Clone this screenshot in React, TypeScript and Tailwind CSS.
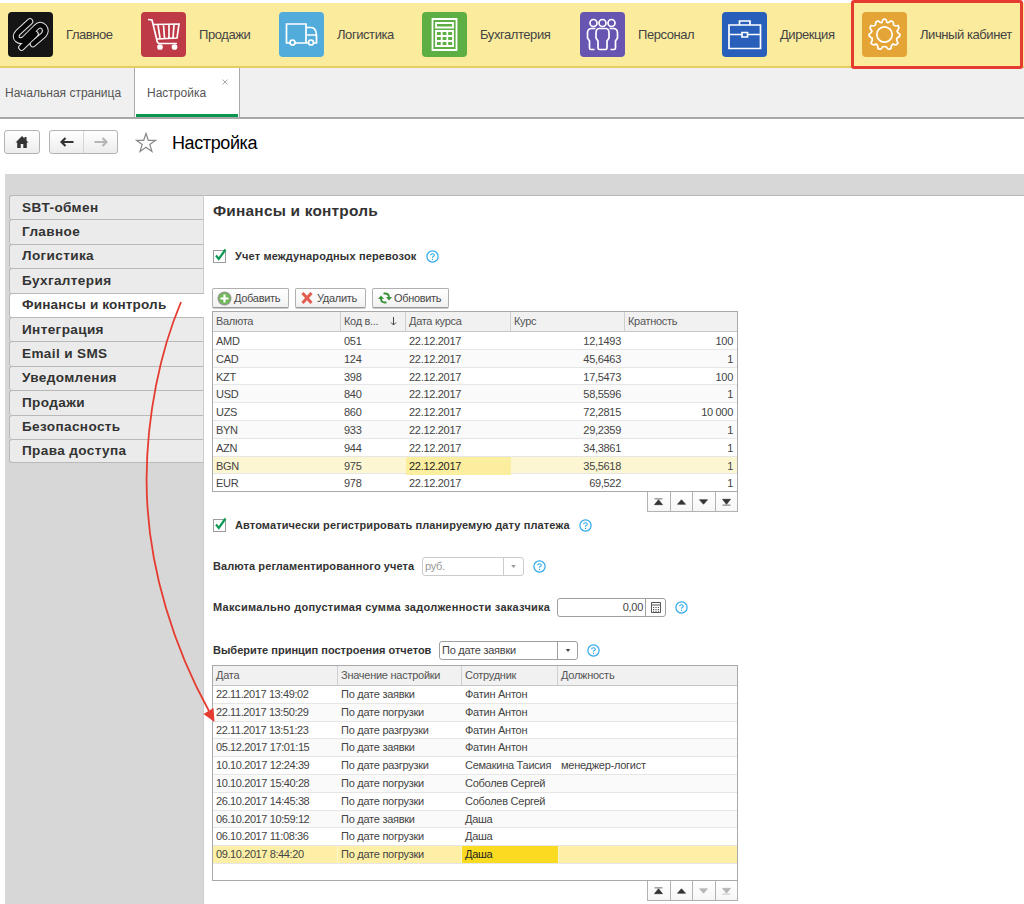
import type { ReactNode } from "react";

const NAV: { label: string; width: string; color: string; icon: ReactNode }[] = [
  {
    label: "Главное",
    width: "w-[133px]",
    color: "bg-[#151515]",
    icon: (
      <g strokeLinecap="round" strokeLinejoin="round">
        <path d="M22 9.500L10 20.500Q6.500 24.500 9.500 27.500Q13 30 16.500 27L28 15.500Q32 11 36 15Q39 19 35.500 23L25 32M13.500 35.500L27.500 22" stroke="#e2e2e2" strokeWidth="6.600" />
        <path d="M22 9.500L10 20.500Q6.500 24.500 9.500 27.500Q13 30 16.500 27L28 15.500Q32 11 36 15Q39 19 35.500 23L25 32M13.500 35.500L27.500 22" stroke="#060606" strokeWidth="4.600" />
      </g>
    ),
  },
  {
    label: "Продажи",
    width: "w-[138px]",
    color: "bg-[#be3a46]",
    icon: (
      <>
        <path d="M7 7.500L11 8L15.500 26.500Q16 31 18 31.500H36M12 12.500L38 12L36 26L16 27M17 13L19 26M22.500 13L23.500 26M28 13V26M33 13L32 26" />
        <circle cx="19" cy="35" r="2" fill="#fff" />
        <circle cx="33.500" cy="35" r="2" fill="#fff" />
      </>
    ),
  },
  {
    label: "Логистика",
    width: "w-[143px]",
    color: "bg-[#51acdc]",
    icon: (
      <>
        <path d="M11 31H7.500V12H27V31H16M27 15.500H32Q37 15.500 37.500 23V31H34.500M29.500 31H27M28 23H37.500" />
        <circle cx="13.500" cy="30.500" r="2.500" />
        <circle cx="32" cy="30.500" r="2.500" />
      </>
    ),
  },
  {
    label: "Бухгалтерия",
    width: "w-[158px]",
    color: "bg-[#5daf44]",
    icon: (
      <path d="M10.500 7H34.500V38H10.500ZM14 11H31V15.500H14ZM14 19H31V34H14ZM14 24H31M14 29H31M19.700 19V34M25.300 19V34" strokeWidth="1.800" />
    ),
  },
  {
    label: "Персонал",
    width: "w-[142px]",
    color: "bg-[#6855b2]",
    icon: (
      <>
        <circle cx="13.500" cy="11" r="3.500" />
        <circle cx="22.500" cy="11" r="3.500" />
        <circle cx="31.500" cy="11" r="3.500" />
        <path d="M19 16.500H26Q29 17 29 21V26L27 29V36Q27 37.500 25.500 37.500H19.500Q18 37.500 18 36V29L16 26V21Q16 17 19 16.500ZM15.500 16.500H11Q7.500 17 7.500 21V26L9.500 29V36Q9.500 37.500 11 37.500H14.500M29.500 16.500H34Q37.500 17 37.500 21V26L35.500 29V36Q35.500 37.500 34 37.500H30.500" />
      </>
    ),
  },
  {
    label: "Дирекция",
    width: "w-[140px]",
    color: "bg-[#285fba]",
    icon: <path d="M7 13H38.500V36.500H7ZM17.500 13V9H28V13M7 22.500H19.500M26 22.500H38.500M20 20.500H25.500V25H20Z" />,
  },
  {
    label: "Личный кабинет",
    width: "w-[160px]",
    color: "bg-[#e5a436]",
    icon: (
      <>
        <circle cx="22.500" cy="22.500" r="7.700" />
        <path d="M22.500 7Q24.500 7 25 10.500Q27 11 28.500 9Q32 9 31.500 13Q33 14.500 36 13.500Q38 16 35 19Q35.500 21 38 22.500Q38 25 35 26Q34 28 36 31Q34 34 31 32Q29 33 29 36.500Q26 38.500 24.500 35Q22.500 34 20.500 35Q19 38.500 16 36.500Q16 33 14 32Q11 34 9 31Q11 28 10 26Q7 25 7 22.500Q9.500 21 10 19Q7 16 9 13.500Q12 14.500 13.500 13Q13 9 16.500 9Q18 11 20 10.500Q20.500 7 22.500 7Z" />
      </>
    ),
  },
];

const SECTIONS = [
  "SBT-обмен",
  "Главное",
  "Логистика",
  "Бухгалтерия",
  "Финансы и контроль",
  "Интеграция",
  "Email и SMS",
  "Уведомления",
  "Продажи",
  "Безопасность",
  "Права доступа",
];

const RATES = [
  ["AMD", "051", "12,1493", "100"],
  ["CAD", "124", "45,6463", "1"],
  ["KZT", "398", "17,5473", "100"],
  ["USD", "840", "58,5596", "1"],
  ["UZS", "860", "72,2815", "10 000"],
  ["BYN", "933", "29,2359", "1"],
  ["AZN", "944", "34,3861", "1"],
  ["BGN", "975", "35,5618", "1"],
  ["EUR", "978", "69,522", "1"],
];

const HISTORY = [
  ["22.11.2017 13:49:02", "По дате заявки", "Фатин Антон", ""],
  ["22.11.2017 13:50:29", "По дате погрузки", "Фатин Антон", ""],
  ["22.11.2017 13:51:23", "По дате разгрузки", "Фатин Антон", ""],
  ["05.12.2017 17:01:15", "По дате заявки", "Фатин Антон", ""],
  ["10.10.2017 12:24:39", "По дате разгрузки", "Семакина Таисия", "менеджер-логист"],
  ["10.10.2017 15:40:28", "По дате погрузки", "Соболев Сергей", ""],
  ["26.10.2017 14:45:38", "По дате погрузки", "Соболев Сергей", ""],
  ["06.10.2017 10:59:12", "По дате заявки", "Даша", ""],
  ["06.10.2017 11:08:36", "По дате погрузки", "Даша", ""],
  ["09.10.2017 8:44:20", "По дате погрузки", "Даша", ""],
];

function Help({ className = "" }: { className?: string }) {
  return (
    <svg viewBox="0 0 13 13" className={`h-[13px] w-[13px] shrink-0 ${className}`} fill="none" stroke="#2fa9ea">
      <circle cx="6.500" cy="6.500" r="5.600" strokeWidth="1.200" />
      <path d="M4.700 5.300Q4.700 3.700 6.500 3.700T8.300 5.200Q8.300 6 7.200 6.500Q6.500 6.900 6.500 7.700M6.500 8.800V9.900" strokeWidth="1.100" />
    </svg>
  );
}

function Check() {
  return (
    <span className="flex h-[13px] w-[13px] shrink-0 border border-[#9c9c9c] bg-white">
      <svg viewBox="0 0 13 14" className="-mt-[3px] h-[14px] w-[13px] shrink-0 overflow-visible" fill="none">
        <path d="M2 7.500L4.800 11L11.500 1.500" stroke="#0c9a55" strokeWidth="2.200" />
      </svg>
    </span>
  );
}

const PAGER_SHAPES = [
  "M1.500 1H10.500M6 2L1.500 7.500H10.500Z",
  "M6 2L1.500 7H10.500Z",
  "M6 7L1.500 2H10.500Z",
  "M1.500 8H10.500M6 7L1.500 1.500H10.500Z",
];

function Pager({ muted = false }: { muted?: boolean }) {
  return (
    <div className="ml-auto flex h-5 w-[91px] border border-t-0 border-[#b2b2b2] bg-linear-to-b from-white to-[#f6f6f6]">
      {PAGER_SHAPES.map((d, i) => (
        <span
          key={d}
          className={`flex flex-1 items-center justify-center ${i ? "border-l border-[#b2b2b2]" : ""} ${
            muted && i > 1 ? "text-[#b5b5b5]" : "text-[#333]"
          }`}
        >
          <svg viewBox="0 0 12 9" className="h-2 w-[11px]" fill="currentColor" stroke="currentColor" strokeWidth="0.800">
            <path d={d} />
          </svg>
        </span>
      ))}
    </div>
  );
}

function Bold({ children, className = "" }: { children: ReactNode; className?: string }) {
  return <span className={`text-[11px] font-bold whitespace-nowrap text-[#333] ${className}`}>{children}</span>;
}

const BUTTON =
  "flex h-5 items-center rounded-[2px] border border-[#b0b0b0] border-b-[#999] bg-linear-to-b from-white to-[#f1f1f1] text-[11px] text-[#4a4a4a] shadow-[0_1px_0_#ccc] whitespace-nowrap";
const RATE_GRID = "grid grid-cols-[128px_65px_105px_114px_1fr]";
const HISTORY_GRID = "grid grid-cols-[125px_124px_96px_1fr]";

export default function App() {
  return (
    <div className="relative flex h-[904px] w-[1024px] flex-col overflow-hidden bg-white font-['Liberation_Sans',Arial,sans-serif] text-[#444]">
      <header className="mt-[3px] flex h-[65px] shrink-0 border-b-2 border-[#e3cd64] bg-[#fbeb9d] pt-[9px] pl-2">
        {NAV.map((n) => (
          <div key={n.label} className={`flex h-[45px] shrink-0 items-center gap-[13px] ${n.width}`}>
            <span className={`h-[45px] w-[45px] shrink-0 rounded-[4px] ${n.color}`}>
              <svg viewBox="0 0 45 45" className="h-[45px] w-[45px]" fill="none" stroke="#fff" strokeWidth="1.700">
                {n.icon}
              </svg>
            </span>
            <span className="pt-px text-[13px] tracking-[-0.430px] whitespace-nowrap text-[#444]">{n.label}</span>
          </div>
        ))}
      </header>

      <div className="flex h-[51px] shrink-0 border-b-2 border-[#a8a8a8] bg-[#f0f0f0] text-[12px] text-[#555]">
        <div className="flex w-[134px] items-center pl-[5px]">Начальная страница</div>
        <div className="relative flex w-[106px] items-center border-x border-[#aaa] bg-white pl-3">
          Настройка
          <svg viewBox="0 0 6 6" className="absolute top-[11px] right-[11px] h-[6px] w-[6px]" stroke="#aaa" strokeWidth="1">
            <path d="M0.500 0.500L5.500 5.500M5.500 0.500L0.500 5.500" />
          </svg>
          <span className="absolute inset-x-px bottom-0 h-[3px] bg-[#0b964f]" />
        </div>
      </div>

      <div className="flex h-[55px] shrink-0 items-start pt-[11px] pl-1">
        <span className="flex h-6 w-9 items-center justify-center rounded-[3px] border border-[#b3b3b3] bg-linear-to-b from-white to-[#ececec]">
          <svg viewBox="0 0 14 12" className="h-3 w-[14px]" fill="#333">
            <path d="M7 0L0.500 6.500H2.200V12H5.700V8H8.300V12H11.800V6.500H13.500L11.500 4.500V1H9.500V2.500Z" />
          </svg>
        </span>
        <span className="ml-[9px] flex h-6 w-[69px] rounded-[3px] border border-[#b3b3b3] bg-linear-to-b from-white to-[#ececec]">
          <span className="flex flex-1 items-center justify-center border-r border-[#d5d5d5]">
            <svg viewBox="0 0 14 10" className="h-[10px] w-[14px]" fill="none" stroke="#333" strokeWidth="2.200">
              <path d="M13.500 5H2M5.500 1L1.500 5L5.500 9" />
            </svg>
          </span>
          <span className="flex flex-1 items-center justify-center">
            <svg viewBox="0 0 14 10" className="h-[10px] w-[14px]" fill="none" stroke="#b5b5b5" strokeWidth="2.200">
              <path d="M0.500 5H12M8.500 1L12.500 5L8.500 9" />
            </svg>
          </span>
        </span>
        <svg viewBox="0 0 22 21" className="mt-[2px] ml-[17px] h-[21px] w-[22px]" fill="none" stroke="#888" strokeWidth="1.200">
          <path d="M11 1.500L13.300 8.300H20.500L14.800 12.500L17 19.500L11 15.300L5 19.500L7.200 12.500L1.500 8.300H8.700Z" />
        </svg>
        <h1 className="ml-[15px] text-[18px] leading-[26px] tracking-[-0.400px] text-black">Настройка</h1>
      </div>

      <div className="ml-[5px] flex grow flex-col bg-[#d7d7d7] pt-[21px]">
        <div className="flex grow">
          <nav className="w-[199px] shrink-0 border-r border-[#ccc] pl-1">
            {SECTIONS.map((s, i) => (
              <div
                key={s}
                className={`flex h-[24.400px] items-center rounded-l-[3px] border-t border-l border-[#b9b9b9] pl-3 text-[12px] font-bold whitespace-nowrap text-[#333] ${
                  i === 4 ? "-mr-px bg-white tracking-[0.130px]" : "bg-[#ebebeb] tracking-[0.330px]"
                } ${i === 10 ? "border-b" : ""}`}
              >
                <span className="origin-left scale-x-[1.130]">{s}</span>
              </div>
            ))}
          </nav>

          <main className="flex grow flex-col border-t border-[#b9b9b9] bg-white pl-[9px]">
            <h2 className="flex h-[31px] origin-left scale-x-[1.100] items-center text-[14px] font-bold tracking-[0.200px] text-[#333]">
              Финансы и контроль
            </h2>
            <div className="mt-[19px] flex h-5 items-center">
              <Check />
              <Bold className="ml-[9px] w-[182px] tracking-[0.150px]">Учет международных перевозок</Bold>
              <Help className="ml-[9px]" />
            </div>

            <div className="mt-[22px] -ml-px flex gap-[6px]">
              <span className={`${BUTTON} w-[77px] pl-1`}>
                <svg viewBox="0 0 15 15" className="mr-[2px] h-[15px] w-[15px] shrink-0">
                  <circle cx="7.500" cy="7.500" r="7" fill="#999" />
                  <circle cx="7.500" cy="7.500" r="6" fill="#72b65a" />
                  <path d="M7.500 3.500V11.500M3.500 7.500H11.500" stroke="#fff" strokeWidth="2.200" />
                </svg>
                <span className="tracking-[-0.300px]">Добавить</span>
              </span>
              <span className={`${BUTTON} w-[71px] pl-[5px]`}>
                <svg viewBox="0 0 12 12" className="mr-[4px] h-3 w-3 shrink-0" stroke="#e25c50" strokeWidth="3">
                  <path d="M1.500 1L10.500 11M10.500 1L1.500 11" />
                </svg>
                <span className="tracking-[-0.300px]">Удалить</span>
              </span>
              <span className={`${BUTTON} w-[77px] pl-[5px]`}>
                <svg viewBox="0 0 14 12" className="mr-[2px] h-3 w-[14px] shrink-0" fill="none" stroke="#36913a" strokeWidth="1.800">
                  <path d="M5.500 1.500H7Q11 1.500 11 5.500M8.500 10.500H7Q3 10.500 3 6.500" />
                  <path d="M8 5H14L11 8.500ZM0 7H6L3 3.500Z" fill="#36913a" stroke="none" />
                </svg>
                <span className="tracking-[-0.350px]">Обновить</span>
              </span>
            </div>

            <div className="mt-[3px] -ml-px h-[181px] w-[526px] overflow-hidden border border-[#a9a9a9] text-[11px] tracking-[-0.300px]">
              <div className={`${RATE_GRID} h-5 border-b border-[#c6c6c6] bg-[#f1f1f1] leading-[19px] text-[#555]`}>
                <span className="border-r border-[#d0d0d0] pl-[3px]">Валюта</span>
                <span className="flex justify-between border-r border-[#d0d0d0] pr-2 pl-[3px]">
                  Код в...
                  <svg viewBox="0 0 7 9" className="mt-[5px] h-[9px] w-[7px]" fill="none" stroke="#444">
                    <path d="M3.500 0V8M1 5.500L3.500 8L6 5.500" />
                  </svg>
                </span>
                <span className="border-r border-[#d0d0d0] pl-[3px]">Дата курса</span>
                <span className="border-r border-[#d0d0d0] pl-[3px]">Курс</span>
                <span className="pl-[3px]">Кратность</span>
              </div>
              {RATES.map(([code, num, rate, mult], i) => (
                <div
                  key={code}
                  className={`${RATE_GRID} h-[17.800px] leading-[18px] ${i < 8 ? "border-b border-[#e6e6e6]" : ""} ${
                    i === 7 ? "bg-[#fdf6d2]" : i % 2 ? "bg-[#fafafa]" : "bg-white"
                  }`}
                >
                  <span className="pl-[3px]">{code}</span>
                  <span className="pl-[3px]">{num}</span>
                  <span className={i === 7 ? "bg-[#fcee9f] pl-[3px] text-[#222]" : "pl-[3px]"}>22.12.2017</span>
                  <span className="pr-[4px] text-right">{rate}</span>
                  <span className="pr-[4px] text-right">{mult}</span>
                </div>
              ))}
            </div>
            <div className="-ml-px w-[526px]">
              <Pager />
            </div>

            <div className="mt-[3px] flex h-5 items-center">
              <Check />
              <Bold className="ml-[9px] w-[336px] tracking-[0.120px]">Автоматически регистрировать планируемую дату платежа</Bold>
              <Help className="ml-[8px]" />
            </div>

            <div className="mt-[21px] flex h-5 items-center">
              <Bold className="w-[209px] tracking-[0.090px]">Валюта регламентированного учета</Bold>
              <span className="flex h-[19px] w-[102px] items-center rounded-[3px] border border-[#ccc] text-[11px] tracking-[-0.300px] text-[#999]">
                <span className="grow pl-[2px]">руб.</span>
                <span className="flex h-full w-[20px] items-center justify-center border-l border-[#ccc]">
                  <svg viewBox="0 0 6 4" className="h-[3px] w-[5px]" fill="#999">
                    <path d="M0 0H6L3 4Z" />
                  </svg>
                </span>
              </span>
              <Help className="ml-[9px]" />
            </div>

            <div className="mt-[21px] flex h-5 items-center">
              <Bold className="w-[344px] tracking-[0.270px]">Максимально допустимая сумма задолженности заказчика</Bold>
              <span className="flex h-[19px] w-[109px] items-center rounded-[3px] border border-[#a0a0a0] text-[11px] tracking-[-0.300px]">
                <span className="grow pr-[2px] text-right">0,00</span>
                <span className="flex h-full w-[20px] items-center justify-center border-l border-[#a0a0a0]">
                  <svg viewBox="0 0 10 11" className="h-[11px] w-[10px]" fill="none" stroke="#555">
                    <path d="M0.500 0.500H9.500V10.500H0.500ZM1 3H9" />
                    <path d="M2 5.500H8M2 7.500H8M2 9.200H8" strokeDasharray="1.200 1.200" />
                  </svg>
                </span>
              </span>
              <Help className="ml-[9px]" />
            </div>

            <div className="mt-[23px] flex h-5 items-center">
              <Bold className="w-[226px]">Выберите принцип построения отчетов</Bold>
              <span className="flex h-[19px] w-[139px] items-center rounded-[3px] border border-[#a0a0a0] text-[11px] tracking-[-0.250px]">
                <span className="grow pl-[2px]">По дате заявки</span>
                <span className="flex h-full w-[20px] items-center justify-center border-l border-[#a0a0a0]">
                  <svg viewBox="0 0 6 4" className="h-[3px] w-[6px]" fill="#444">
                    <path d="M0 0H6L3 4Z" />
                  </svg>
                </span>
              </span>
              <Help className="ml-[9px]" />
            </div>

            <div className="mt-[5px] -ml-px h-[216px] w-[526px] shrink-0 border border-[#a9a9a9] text-[11px] tracking-[-0.260px]">
              <div className={`${HISTORY_GRID} h-5 border-b border-[#c6c6c6] bg-[#f1f1f1] leading-[19px] text-[#555]`}>
                <span className="border-r border-[#d0d0d0] pl-[3px]">Дата</span>
                <span className="border-r border-[#d0d0d0] pl-[3px]">Значение настройки</span>
                <span className="border-r border-[#d0d0d0] pl-[3px]">Сотрудник</span>
                <span className="pl-[3px]">Должность</span>
              </div>
              {HISTORY.map(([date, value, person, role], i) => (
                <div
                  key={date}
                  className={`${HISTORY_GRID} h-[17.800px] border-b border-[#e6e6e6] leading-[17px] whitespace-nowrap ${
                    i === 9 ? "bg-[#fdf0a6]" : i % 2 ? "bg-[#fafafa]" : "bg-white"
                  }`}
                >
                  <span className={`pl-[3px] tracking-[-0.400px] ${i === 9 ? "border-r border-[#fff6cf]" : ""}`}>{date}</span>
                  <span className={`pl-[3px] ${i === 9 ? "border-r border-[#fff6cf]" : ""}`}>{value}</span>
                  <span className={`pl-[3px] ${i === 9 ? "bg-[#fbdb22] text-[#222]" : ""}`}>{person}</span>
                  <span className={i === 9 ? "border-l border-[#fff6cf] pl-[3px]" : "pl-[3px]"}>{role}</span>
                </div>
              ))}
            </div>
            <div className="-ml-px w-[526px]">
              <Pager muted />
            </div>
          </main>
        </div>
      </div>

      <div className="absolute top-0 left-[851px] h-[69px] w-[172px] rounded-[3px] border-[3px] border-[#e63b31]" />
      <svg viewBox="0 0 80 430" className="absolute top-[296px] left-[140px] h-[430px] w-[80px]" fill="none">
        <path d="M41 6C20 56 7 119 6.600 182C6 274 38 359 69 415" stroke="#e63b31" strokeWidth="1.800" />
        <path d="M74.500 426L63.500 418L73.500 412Z" fill="#e63b31" />
      </svg>
    </div>
  );
}
